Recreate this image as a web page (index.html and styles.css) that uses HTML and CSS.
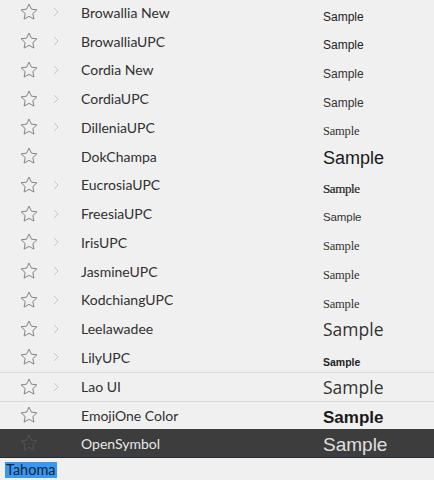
FILE: index.html
```html
<!DOCTYPE html>
<html>
<head>
<meta charset="utf-8">
<link rel="stylesheet" href="styles.css">
</head>
<body>
<div class="list">
  <div class="row"><span class="star"><svg viewBox="0 0 24 24"><polygon points="12,2.5 14.9,8.6 21.5,9.4 16.6,13.9 17.9,20.5 12,17.2 6.1,20.5 7.4,13.9 2.5,9.4 9.1,8.6"/></svg></span><span class="chev"><svg viewBox="0 0 6 10"><polyline points="1,1 5,5 1,9"/></svg></span><span class="name">Browallia New</span><span class="sample s-arial12">Sample</span></div>
  <div class="row"><span class="star"><svg viewBox="0 0 24 24"><polygon points="12,2.5 14.9,8.6 21.5,9.4 16.6,13.9 17.9,20.5 12,17.2 6.1,20.5 7.4,13.9 2.5,9.4 9.1,8.6"/></svg></span><span class="chev"><svg viewBox="0 0 6 10"><polyline points="1,1 5,5 1,9"/></svg></span><span class="name">BrowalliaUPC</span><span class="sample s-arial12">Sample</span></div>
  <div class="row"><span class="star"><svg viewBox="0 0 24 24"><polygon points="12,2.5 14.9,8.6 21.5,9.4 16.6,13.9 17.9,20.5 12,17.2 6.1,20.5 7.4,13.9 2.5,9.4 9.1,8.6"/></svg></span><span class="chev"><svg viewBox="0 0 6 10"><polyline points="1,1 5,5 1,9"/></svg></span><span class="name">Cordia New</span><span class="sample s-cordia">Sample</span></div>
  <div class="row"><span class="star"><svg viewBox="0 0 24 24"><polygon points="12,2.5 14.9,8.6 21.5,9.4 16.6,13.9 17.9,20.5 12,17.2 6.1,20.5 7.4,13.9 2.5,9.4 9.1,8.6"/></svg></span><span class="chev"><svg viewBox="0 0 6 10"><polyline points="1,1 5,5 1,9"/></svg></span><span class="name">CordiaUPC</span><span class="sample s-cordia">Sample</span></div>
  <div class="row"><span class="star"><svg viewBox="0 0 24 24"><polygon points="12,2.5 14.9,8.6 21.5,9.4 16.6,13.9 17.9,20.5 12,17.2 6.1,20.5 7.4,13.9 2.5,9.4 9.1,8.6"/></svg></span><span class="chev"><svg viewBox="0 0 6 10"><polyline points="1,1 5,5 1,9"/></svg></span><span class="name">DilleniaUPC</span><span class="sample s-serif">Sample</span></div>
  <div class="row"><span class="star"><svg viewBox="0 0 24 24"><polygon points="12,2.5 14.9,8.6 21.5,9.4 16.6,13.9 17.9,20.5 12,17.2 6.1,20.5 7.4,13.9 2.5,9.4 9.1,8.6"/></svg></span><span class="chev"></span><span class="name">DokChampa</span><span class="sample s-arial18">Sample</span></div>
  <div class="row"><span class="star"><svg viewBox="0 0 24 24"><polygon points="12,2.5 14.9,8.6 21.5,9.4 16.6,13.9 17.9,20.5 12,17.2 6.1,20.5 7.4,13.9 2.5,9.4 9.1,8.6"/></svg></span><span class="chev"><svg viewBox="0 0 6 10"><polyline points="1,1 5,5 1,9"/></svg></span><span class="name">EucrosiaUPC</span><span class="sample s-serif13">Sample</span></div>
  <div class="row"><span class="star"><svg viewBox="0 0 24 24"><polygon points="12,2.5 14.9,8.6 21.5,9.4 16.6,13.9 17.9,20.5 12,17.2 6.1,20.5 7.4,13.9 2.5,9.4 9.1,8.6"/></svg></span><span class="chev"><svg viewBox="0 0 6 10"><polyline points="1,1 5,5 1,9"/></svg></span><span class="name">FreesiaUPC</span><span class="sample s-cond">Sample</span></div>
  <div class="row"><span class="star"><svg viewBox="0 0 24 24"><polygon points="12,2.5 14.9,8.6 21.5,9.4 16.6,13.9 17.9,20.5 12,17.2 6.1,20.5 7.4,13.9 2.5,9.4 9.1,8.6"/></svg></span><span class="chev"><svg viewBox="0 0 6 10"><polyline points="1,1 5,5 1,9"/></svg></span><span class="name">IrisUPC</span><span class="sample s-serif">Sample</span></div>
  <div class="row"><span class="star"><svg viewBox="0 0 24 24"><polygon points="12,2.5 14.9,8.6 21.5,9.4 16.6,13.9 17.9,20.5 12,17.2 6.1,20.5 7.4,13.9 2.5,9.4 9.1,8.6"/></svg></span><span class="chev"><svg viewBox="0 0 6 10"><polyline points="1,1 5,5 1,9"/></svg></span><span class="name">JasmineUPC</span><span class="sample s-serif">Sample</span></div>
  <div class="row"><span class="star"><svg viewBox="0 0 24 24"><polygon points="12,2.5 14.9,8.6 21.5,9.4 16.6,13.9 17.9,20.5 12,17.2 6.1,20.5 7.4,13.9 2.5,9.4 9.1,8.6"/></svg></span><span class="chev"><svg viewBox="0 0 6 10"><polyline points="1,1 5,5 1,9"/></svg></span><span class="name">KodchiangUPC</span><span class="sample s-serif">Sample</span></div>
  <div class="row"><span class="star"><svg viewBox="0 0 24 24"><polygon points="12,2.5 14.9,8.6 21.5,9.4 16.6,13.9 17.9,20.5 12,17.2 6.1,20.5 7.4,13.9 2.5,9.4 9.1,8.6"/></svg></span><span class="chev"><svg viewBox="0 0 6 10"><polyline points="1,1 5,5 1,9"/></svg></span><span class="name">Leelawadee</span><span class="sample s-light18">Sample</span></div>
  <div class="row"><span class="star"><svg viewBox="0 0 24 24"><polygon points="12,2.5 14.9,8.6 21.5,9.4 16.6,13.9 17.9,20.5 12,17.2 6.1,20.5 7.4,13.9 2.5,9.4 9.1,8.6"/></svg></span><span class="chev"><svg viewBox="0 0 6 10"><polyline points="1,1 5,5 1,9"/></svg></span><span class="name">LilyUPC</span><span class="sample s-bold11">Sample</span></div>
  <div class="row sep"><span class="star"><svg viewBox="0 0 24 24"><polygon points="12,2.5 14.9,8.6 21.5,9.4 16.6,13.9 17.9,20.5 12,17.2 6.1,20.5 7.4,13.9 2.5,9.4 9.1,8.6"/></svg></span><span class="chev"><svg viewBox="0 0 6 10"><polyline points="1,1 5,5 1,9"/></svg></span><span class="name">Lao UI</span><span class="sample s-light18">Sample</span></div>
  <div class="row sep"><span class="star"><svg viewBox="0 0 24 24"><polygon points="12,2.5 14.9,8.6 21.5,9.4 16.6,13.9 17.9,20.5 12,17.2 6.1,20.5 7.4,13.9 2.5,9.4 9.1,8.6"/></svg></span><span class="chev"></span><span class="name">EmojiOne Color</span><span class="sample s-bold17">Sample</span></div>
  <div class="row selected"><span class="star"><svg viewBox="0 0 24 24"><polygon points="12,2.5 14.9,8.6 21.5,9.4 16.6,13.9 17.9,20.5 12,17.2 6.1,20.5 7.4,13.9 2.5,9.4 9.1,8.6"/></svg></span><span class="chev"></span><span class="name">OpenSymbol</span><span class="sample s-arial19">Sample</span></div>
</div>
<div class="footer"><span class="input-sel">Tahoma</span></div>
</body>
</html>
```
FILE: styles.css
```css
html, body {
  margin: 0;
  padding: 0;
  background: #f0f0f0;
  width: 434px;
  height: 480px;
  overflow: hidden;
}
.list {
  margin-top: -2px;
}
.row {
  box-sizing: border-box;
  height: 28.75px;
  display: grid;
  grid-template-columns: 48px 33px 242px 1fr;
  align-items: center;
}
.row.sep {
  border-top: 1px solid #dadada;
}
.star {
  padding-left: 19px;
  display: flex;
  align-items: center;
}
.star svg {
  width: 20px;
  height: 20px;
  fill: none;
  stroke: #7a7a7a;
  stroke-width: 1.1;
  stroke-linejoin: miter;
}
.chev {
  padding-left: 5px;
  display: flex;
  align-items: center;
}
.chev svg {
  width: 6px;
  height: 10px;
  fill: none;
  stroke: #c6c6c6;
  stroke-width: 1;
}
.name {
  font-family: Lato, "Open Sans", sans-serif;
  font-size: 14px;
  color: #303030;
  white-space: nowrap;
}
.sample {
  color: #222;
  white-space: nowrap;
  line-height: 1;
}
.s-arial12 { font-family: "Liberation Sans", Arial, sans-serif; font-size: 12px; padding-top: 8.3px; }
.s-cordia { font-family: "Liberation Sans", Arial, sans-serif; font-size: 12px; color: #333; padding-top: 8.3px; }
.s-serif { font-family: "Liberation Serif", serif; font-size: 12.5px; letter-spacing: -0.2px; color: #333; padding-top: 8.2px; }
.s-serif13 { font-family: "Liberation Serif", serif; font-size: 13px; letter-spacing: -0.4px; color: #222; -webkit-text-stroke: 0.2px #222; padding-top: 7.8px; }
.s-cond { font-family: "Liberation Sans", sans-serif; font-size: 11.5px; letter-spacing: -0.1px; color: #333; padding-top: 8.6px; }
.s-arial18 { font-family: "Liberation Sans", Arial, sans-serif; font-size: 18px; color: #1a1a1a; padding-top: 4.1px; }
.s-light18 { font-family: "Open Sans", sans-serif; font-size: 17.5px; color: #333; padding-top: 3px; }
.s-bold11 { font-family: "Liberation Sans", Arial, sans-serif; font-size: 10.5px; font-weight: bold; color: #222; padding-top: 9.3px; }
.s-bold17 { font-family: "Liberation Sans", Arial, sans-serif; font-size: 17px; font-weight: bold; color: #1a1a1a; padding-top: 4.8px; }
.s-arial19 { font-family: "Liberation Sans", Arial, sans-serif; font-size: 19px; padding-top: 3.4px; }
.row.selected {
  background: #3d3d3d;
  border-bottom: 1px solid #1f2b38;
}
.row.selected .name { color: #e8e8e8; }
.row.selected .sample { color: #e0e0e0; }
.row.selected .star svg { stroke: #555; }
.footer {
  padding: 3px 0 0 5px;
}
.input-sel {
  display: inline-block;
  font-family: Lato, "Open Sans", sans-serif;
  font-size: 14.5px;
  line-height: 16px;
  background: #3a97f0;
  color: #10263d;
  padding: 0 1px;
}
```
